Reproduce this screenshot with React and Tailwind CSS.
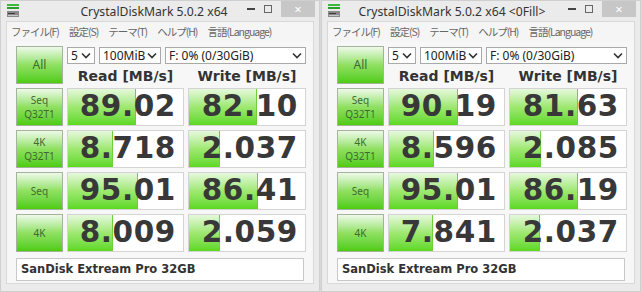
const windows = [
  {
    title: 'CrystalDiskMark 5.0.2 x64',
    centered: true,
    rows: [
      { label: ['Seq', 'Q32T1'], read: ['89.02', 68], write: ['82.10', 68] },
      { label: ['4K', 'Q32T1'], read: ['8.718', 45], write: ['2.037', 31] },
      { label: ['Seq'], read: ['95.01', 70], write: ['86.41', 69] },
      { label: ['4K'], read: ['8.009', 45], write: ['2.059', 31] },
    ],
  },
  {
    title: 'CrystalDiskMark 5.0.2 x64 <0Fill>',
    centered: false,
    rows: [
      { label: ['Seq', 'Q32T1'], read: ['90.19', 69], write: ['81.63', 68] },
      { label: ['4K', 'Q32T1'], read: ['8.596', 45], write: ['2.085', 31] },
      { label: ['Seq'], read: ['95.01', 69], write: ['86.19', 68] },
      { label: ['4K'], read: ['7.841', 44], write: ['2.037', 30] },
    ],
  },
]

const menu = ['ファイル(F)', '設定(S)', 'テーマ(T)', 'ヘルプ(H)', '言語(Language)']

function AppIcon() {
  return (
    <svg width="12" height="14" viewBox="0 0 12 14">
      <rect x="0" y="0" width="12" height="2" fill="#3cb83c" />
      <rect x="0" y="3" width="12" height="2" fill="#2aa02a" />
      <rect x="0" y="7" width="12" height="6" fill="#8a8a8a" />
      <rect x="1" y="9" width="7" height="1" fill="#3a3a3a" />
      <rect x="1" y="11" width="10" height="1" fill="#c8c8c8" />
    </svg>
  )
}

function Chevron() {
  return (
    <svg width="10" height="7" viewBox="0 0 10 7">
      <path d="M1 1.5 L5 5.5 L9 1.5" fill="none" stroke="#333" strokeWidth="1.6" />
    </svg>
  )
}

function Select({ value, className }) {
  return (
    <div className={`flex h-[17px] items-center justify-between border border-[#a9a9a9] bg-white pl-[3px] pr-[3px] text-[12px] leading-none text-[#222] ${className}`}>
      <span className="whitespace-nowrap">{value}</span>
      <Chevron />
    </div>
  )
}

function Cell({ value, fill }) {
  return (
    <div className="relative h-[38px] border border-[#d4d4d4] bg-white">
      <div
        className="absolute bottom-0 left-0 top-0 border-r border-[#6fcf3a] bg-gradient-to-b from-[#e6f8dc] via-[#9ee870] to-[#5cd81c]"
        style={{ width: fill }}
      />
      <div className="relative flex h-full items-center justify-end pr-[7px] font-['DejaVu_Sans',sans-serif] text-[29.5px] font-bold leading-none tracking-[0.6px] text-[#383838]">
        {value}
      </div>
    </div>
  )
}

function LabelButton({ lines }) {
  return (
    <div className="flex h-[38px] flex-col items-center justify-center border border-[#a4b49c] bg-gradient-to-b from-[#eef9e8] via-[#8fe060] to-[#4ccc08] text-[10px] leading-[14px] text-[#3e6a30]">
      {lines.map((l) => (
        <span key={l}>{l}</span>
      ))}
    </div>
  )
}

function Window({ title, centered, rows }) {
  return (
    <div className="flex h-[292px] w-[320px] flex-col border border-[#cfcfcf] bg-[#ebebeb] font-['Noto_Sans','Noto_Sans_CJK_JP',sans-serif]">
      <div className="flex h-[20px] items-start">
        <div className="ml-[6px] mt-[3px] w-[14px]">
          <AppIcon />
        </div>
        <div className={`flex-1 whitespace-nowrap pt-[2px] text-center text-[12.2px] leading-[17px] text-[#333] ${centered ? 'pl-[46px]' : 'pl-0'}`}>
          {title}
        </div>
        <div className="flex h-[17px] items-start">
          <div className="flex h-[16px] w-[20px] items-center justify-center">
            <div className="h-[2px] w-[8px] bg-[#444]" />
          </div>
          <div className="flex h-[16px] w-[14px] items-center justify-center">
            <div className="h-[8px] w-[8px] border border-[#666]" />
          </div>
          <div className="ml-[6px] mr-[4px] flex h-[16px] w-[34px] items-center justify-center bg-[#c7c7c7] text-[13px] leading-none text-white">
            ×
          </div>
        </div>
      </div>
      <div className="mx-[5px] mb-[7px] flex flex-1 flex-col border border-[#d8d8d8] bg-[#f7f7f7]">
        <div className="flex h-[20px] items-center gap-[10px] whitespace-nowrap bg-[#f5f5f5] pl-[4px] font-['Noto_Sans_CJK_JP',sans-serif] text-[10.5px] leading-none tracking-[-1px] text-[#666]">
          {menu.map((m) => (
            <span key={m}>{m}</span>
          ))}
        </div>
        <div className="flex flex-col px-[9px] pt-[4px]">
          <div className="grid grid-cols-[47px_117px_118px] gap-x-[4px]">
            <div className="flex h-[38px] items-center justify-center border border-[#a4b49c] bg-gradient-to-b from-[#eef9e8] via-[#8fe060] to-[#4ccc08] text-[12px] text-[#3e6a30]">
              All
            </div>
            <div className="col-span-2 flex flex-col">
              <div className="mt-[1px] flex gap-[4px]">
                <Select value="5" className="w-[28px]" />
                <Select value="100MiB" className="w-[62px]" />
                <Select value="F: 0% (0/30GiB)" className="flex-1" />
              </div>
              <div className="grid flex-1 grid-cols-[117px_118px] gap-x-[4px] font-['DejaVu_Sans',sans-serif] text-[14px] font-bold text-[#333]">
                <div className="flex items-end justify-center pb-[1px] leading-none">Read [MB/s]</div>
                <div className="flex items-end justify-center pb-[1px] leading-none">Write [MB/s]</div>
              </div>
            </div>
          </div>
          <div className="mt-[4px] grid grid-cols-[47px_117px_118px] gap-[4px]">
            {rows.map((r, i) => (
              <div key={i} className="contents">
                <LabelButton lines={r.label} />
                <Cell value={r.read[0]} fill={r.read[1]} />
                <Cell value={r.write[0]} fill={r.write[1]} />
              </div>
            ))}
          </div>
          <div className="mt-[6px] flex h-[23px] items-center border border-[#c8c8c8] bg-white pl-[4px] font-['DejaVu_Sans',sans-serif] text-[11.5px] font-bold text-[#333]">
            SanDisk Extream Pro 32GB
          </div>
        </div>
      </div>
    </div>
  )
}

export default function App() {
  return (
    <div className="flex h-[292px] w-[642px] gap-[1px] bg-[#d8d8d8]">
      {windows.map((w) => (
        <Window key={w.title} {...w} />
      ))}
    </div>
  )
}
